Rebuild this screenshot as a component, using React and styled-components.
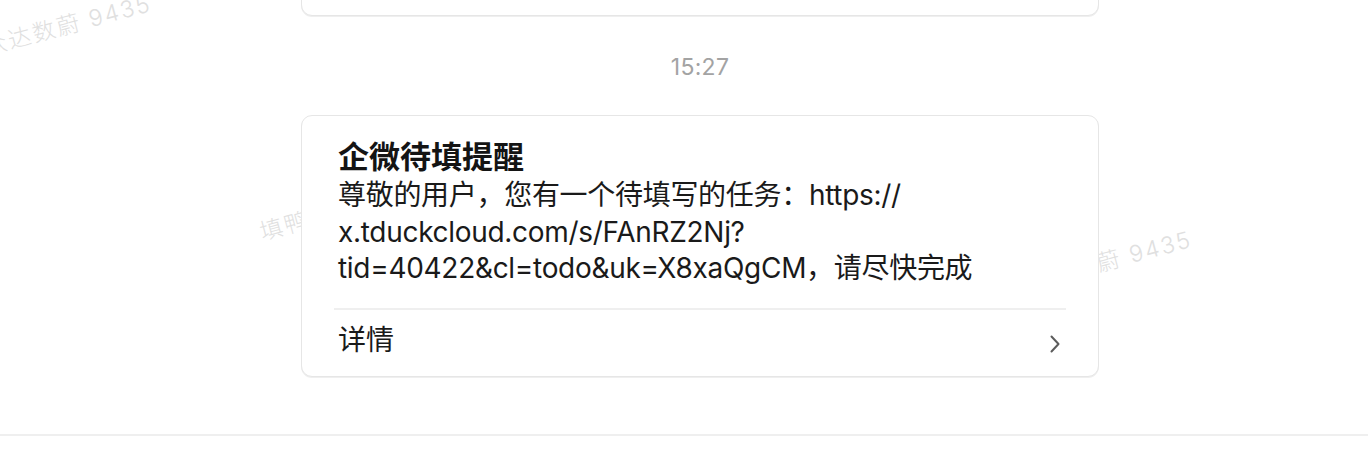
import React from "react";
import styled, { createGlobalStyle } from "styled-components";

const GlobalStyle = createGlobalStyle`
  html, body {
    margin: 0;
    padding: 0;
    background: #ffffff;
  }
  body {
    font-family: Inter, "Noto Sans CJK SC", sans-serif;
    -webkit-font-smoothing: antialiased;
  }
`;

const Page = styled.div`
  position: relative;
  width: 1368px;
  height: 452px;
  overflow: hidden;
  background: #ffffff;
`;

const WatermarkLayer = styled.div`
  position: absolute;
  inset: 0;
  pointer-events: none;
  z-index: 0;
`;

const Watermark = styled.span`
  position: absolute;
  left: ${(p) => p.$x}px;
  top: ${(p) => p.$y}px;
  transform: rotate(-15deg);
  transform-origin: left bottom;
  white-space: nowrap;
  font-family: Inter, "Noto Sans CJK SC", sans-serif;
  font-size: 23px;
  line-height: 27px;
  letter-spacing: 2px;
  font-weight: 300;
  color: #e0e0e0;
`;

const Feed = styled.div`
  position: relative;
  z-index: 1;
  display: flex;
  flex-direction: column;
  align-items: center;
  padding-left: 32px;
`;

const Card = styled.div`
  box-sizing: border-box;
  width: 798px;
  background: #ffffff;
  border: 1px solid #e6e6e6;
  border-radius: 11px;
  box-shadow: 0 1px 0 #efefef;
`;

const PrevCard = styled(Card)`
  height: 80px;
  margin-top: -64px;
`;

const TimeStamp = styled.div`
  margin-top: 36px;
  height: 30px;
  line-height: 30px;
  font-size: 23px;
  color: #a3a3a3;
  letter-spacing: 0.3px;
`;

const MessageCard = styled(Card)`
  margin-top: 33px;
  padding: 21px 32px 0;
`;

const Content = styled.div`
  padding: 0 4px 21px;
`;

const Title = styled.div`
  font-size: 31px;
  line-height: 40px;
  font-weight: 700;
  color: #141414;
`;

const Body = styled.div`
  font-size: 28px;
  line-height: 36.5px;
  letter-spacing: -0.3px;
  color: #1a1a1a;
`;

const Footer = styled.div`
  height: 66px;
  border-top: 2px solid #efefef;
  display: flex;
  align-items: center;
  justify-content: space-between;
  padding: 0 5px 0 4px;
`;

const FooterLabel = styled.span`
  font-size: 28px;
  line-height: 34px;
  color: #1a1a1a;
  margin-bottom: 6px;
`;

const Chevron = styled.svg`
  width: 12px;
  height: 20px;
  margin-top: 2px;
`;

const BottomBar = styled.div`
  position: relative;
  z-index: 1;
  margin-top: 57px;
  height: 20px;
  border-top: 2px solid #efefef;
  background: #ffffff;
`;

const watermarks = [
  { x: -12, y: 34, text: "众达数蔚 9435" },
  { x: 264, y: 219, text: "填鸭 众达数蔚 9435" },
  { x: 972, y: 285, text: "填鸭 众达数蔚 9435" },
];

export default function App() {
  return (
    <>
      <GlobalStyle />
      <Page>
        <WatermarkLayer>
          {watermarks.map((w, i) => (
            <Watermark key={i} $x={w.x} $y={w.y}>
              {w.text}
            </Watermark>
          ))}
        </WatermarkLayer>
        <Feed>
          <PrevCard />
          <TimeStamp>15:27</TimeStamp>
          <MessageCard>
            <Content>
              <Title>企微待填提醒</Title>
              <Body>
                尊敬的用户，您有一个待填写的任务：https://
                <br />
                x.tduckcloud.com/s/FAnRZ2Nj?
                <br />
                tid=40422&amp;cl=todo&amp;uk=X8xaQgCM，请尽快完成
              </Body>
            </Content>
            <Footer>
              <FooterLabel>详情</FooterLabel>
              <Chevron viewBox="0 0 12 20" fill="none">
                <path
                  d="M2.5 2.5 L9.5 10 L2.5 17.5"
                  stroke="#5c5c5c"
                  strokeWidth="2"
                  strokeLinecap="round"
                  strokeLinejoin="round"
                />
              </Chevron>
            </Footer>
          </MessageCard>
        </Feed>
        <BottomBar />
      </Page>
    </>
  );
}
